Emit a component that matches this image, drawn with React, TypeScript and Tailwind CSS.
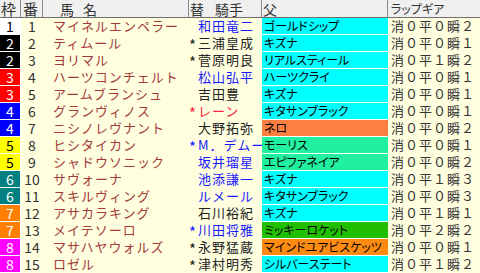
import React from "react";

const WAKU: Record<number, string> = {
  1: "bg-white text-black",
  2: "bg-black text-white",
  3: "bg-[#ff0000] text-white",
  4: "bg-[#0000ff] text-white",
  5: "bg-[#ffff00] text-black",
  6: "bg-[#008080] text-white",
  7: "bg-[#ff8000] text-white",
  8: "bg-[#ff00ff] text-white",
};

const SIRE: Record<string, string> = {
  c: "bg-[#00ffff]",
  o: "bg-[#ff7f40]",
  g: "bg-[#20f0a0]",
  d: "bg-[#20c000]",
  m: "bg-[#ff8c10]",
};

const JC: Record<string, string> = {
  b: "text-[#1a1aff]",
  k: "text-[#222222]",
  r: "text-[#ff2040]",
};

type Row = [number, number, string, string, string, string, string, string, string];

const rows: Row[] = [
  [1, 1, "マイネルエンペラー", "", "和田竜二", "b", "ゴールドシップ", "c", "消０平０瞬２"],
  [2, 2, "ティムール", "*", "三浦皇成", "k", "キズナ", "c", "消０平０瞬１"],
  [2, 3, "ヨリマル", "*", "菅原明良", "k", "リアルスティール", "c", "消０平１瞬２"],
  [3, 4, "ハーツコンチェルト", "", "松山弘平", "b", "ハーツクライ", "c", "消０平０瞬１"],
  [3, 5, "アームブランシュ", "", "吉田豊", "k", "キズナ", "c", "消０平０瞬１"],
  [4, 6, "グランヴィノス", "*", "レーン", "r", "キタサンブラック", "c", "消０平０瞬１"],
  [4, 7, "ニシノレヴナント", "", "大野拓弥", "k", "ネロ", "o", "消０平０瞬２"],
  [5, 8, "ヒシタイカン", "*", "M．デムーロ", "b", "モーリス", "g", "消０平０瞬１"],
  [5, 9, "シャドウソニック", "", "坂井瑠星", "b", "エピファネイア", "g", "消０平０瞬２"],
  [6, 10, "サヴォーナ", "", "池添謙一", "b", "キズナ", "c", "消０平１瞬３"],
  [6, 11, "スキルヴィング", "", "ルメール", "b", "キタサンブラック", "c", "消０平０瞬３"],
  [7, 12, "アサカラキング", "", "石川裕紀", "k", "キズナ", "c", "消０平１瞬１"],
  [7, 13, "メイテソーロ", "*", "川田将雅", "b", "ミッキーロケット", "d", "消０平２瞬２"],
  [8, 14, "マサハヤウォルズ", "*", "永野猛蔵", "k", "マインドユアビスケッツ", "m", "消０平０瞬１"],
  [8, 15, "ロゼル", "*", "津村明秀", "k", "シルバーステート", "c", "消０平１瞬２"],
];

const font = { fontFamily: '"Noto Sans CJK JP", "Noto Sans", sans-serif' };
const grid = "grid grid-cols-[21px_22px_146px_73px_126px_92px]";

export default function App() {
  return (
    <div className="w-[480px] h-[273px] bg-[#ffffe0] overflow-hidden" style={font}>
      <div className={`${grid} h-[18px] bg-[#f0f0f0] border-b border-[#6e6e6e] text-[#333333] leading-none`}>
        <div className="border-r border-[#8a8a8a] text-[15px] pl-[1px] flex items-center">枠</div>
        <div className="border-r border-[#8a8a8a] text-[15px] pl-[2px] flex items-center">番</div>
        <div className="border-r border-[#8a8a8a] text-[14px] pl-[17px] tracking-[9px] flex items-center">馬名</div>
        <div className="border-r border-[#8a8a8a] text-[14px] pl-[1px] flex items-center">
          <span className="w-[25px]">替</span>
          <span>騎手</span>
        </div>
        <div className="border-r border-[#8a8a8a] text-[14px] pl-[1px] flex items-center">父</div>
        <div className="text-[12px] pl-[3px] [font-feature-settings:'palt'] flex items-center">ラップギア</div>
      </div>
      {rows.map((r) => (
        <div key={r[1]} className={`${grid} h-[17px] leading-[16px]`}>
          <div className={`${WAKU[r[0]]} border-b border-r border-white text-center text-[14px]`}>{r[0]}</div>
          <div className="text-center text-[14px] text-[#333333]">{r[1]}</div>
          <div className="pl-[10px] text-[13px] tracking-[1px] text-[#a33a3a] whitespace-nowrap overflow-hidden">{r[2]}</div>
          <div className={`${JC[r[5]]} flex text-[13px] tracking-[1px] whitespace-nowrap overflow-hidden`}>
            <span className="w-[9px] shrink-0 text-[15px] leading-[20px] tracking-normal">{r[3]}</span>
            <span>{r[4]}</span>
          </div>
          <div className={`${SIRE[r[7]]} border-b border-white pl-[2px] text-[12px] text-black whitespace-nowrap overflow-hidden [font-feature-settings:'palt']`}>{r[6]}</div>
          <div className="pl-[3px] text-[13px] tracking-[1px] text-[#333333] whitespace-nowrap">{r[8]}</div>
        </div>
      ))}
    </div>
  );
}
